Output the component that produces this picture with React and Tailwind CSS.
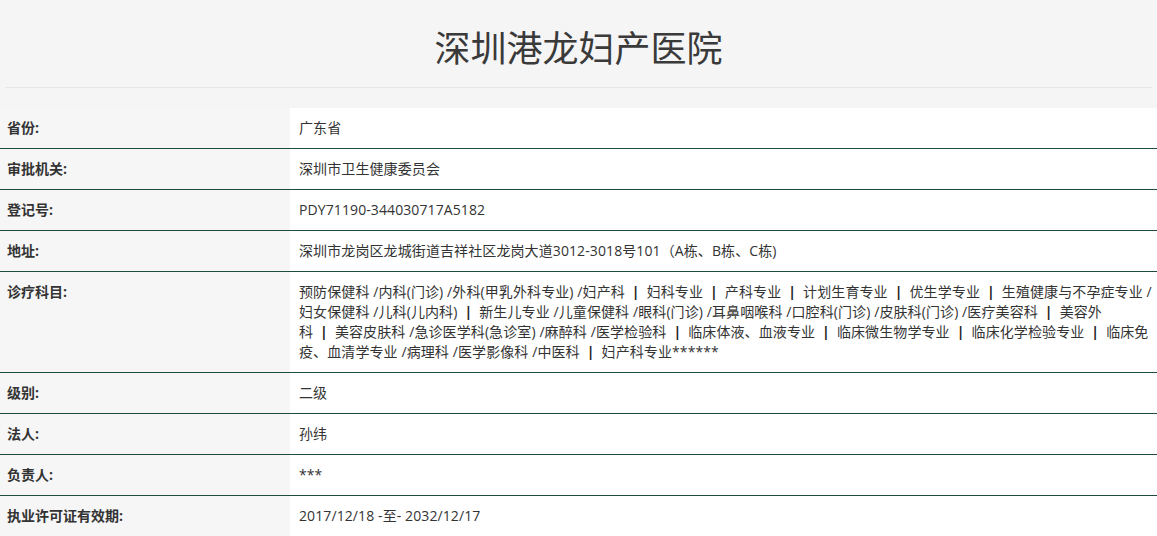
import React from 'react';

const rows = [
    { label: '省份:', value: ['广东省'] },
    { label: '审批机关:', value: ['深圳市卫生健康委员会'] },
    { label: '登记号:', value: ['PDY71190-344030717A5182'] },
    { label: '地址:', value: ['深圳市龙岗区龙城街道吉祥社区龙岗大道3012-3018号101（A栋、B栋、C栋)'] },
    {
        label: '诊疗科目:',
        value: [
            '预防保健科 /内科(门诊) /外科(甲乳外科专业) /妇产科 | 妇科专业 | 产科专业 | 计划生育专业 | 优生学专业 | 生殖健康与不孕症专业 /',
            '妇女保健科 /儿科(儿内科) | 新生儿专业 /儿童保健科 /眼科(门诊) /耳鼻咽喉科 /口腔科(门诊) /皮肤科(门诊) /医疗美容科 | 美容外',
            '科 | 美容皮肤科 /急诊医学科(急诊室) /麻醉科 /医学检验科 | 临床体液、血液专业 | 临床微生物学专业 | 临床化学检验专业 | 临床免',
            '疫、血清学专业 /病理科 /医学影像科 /中医科 | 妇产科专业******',
        ],
    },
    { label: '级别:', value: ['二级'] },
    { label: '法人:', value: ['孙纬'] },
    { label: '负责人:', value: ['***'] },
    { label: '执业许可证有效期:', value: ['2017/12/18 -至- 2032/12/17'] },
];

// the | separators are darker and heavier in the source page
const Line = ({ text }) => {
    const parts = text.split(' | ');
    return (
        <div className="whitespace-pre tracking-[0.1px]">
            {parts.map((part, i) => (
                <React.Fragment key={i}>
                    {i > 0 && <span className="mx-[7px] font-bold text-[#222]">|</span>}
                    {part}
                </React.Fragment>
            ))}
        </div>
    );
};

const App = () => {
    return (
        <div className="min-h-screen bg-[#f5f5f5] text-[#333] font-['Open_Sans','Noto_Sans_CJK_SC',sans-serif]">
            {/* Title */}
            <h1 className="pt-[22px] text-center text-[36px] leading-[54px] font-normal text-[#3a3a3a]">
                深圳港龙妇产医院
            </h1>
            <div className="mx-[5px] mt-[11px] border-t border-[#e8e8e8]"></div>

            {/* Info table */}
            <div className="mt-[20px]">
                {rows.map((row) => (
                    <div key={row.label} className="grid grid-cols-[290px_1fr] border-b border-[#1e4d3b] text-[14px] leading-[20px]">
                        <div className="px-[7px] py-[10px] font-bold bg-[#f6f6f6]">{row.label}</div>
                        <div className="pl-[9px] pr-[6px] py-[10px] bg-white">
                            {row.value.map((line, i) => (
                                <Line key={i} text={line} />
                            ))}
                        </div>
                    </div>
                ))}
            </div>
        </div>
    );
};

export default App;
